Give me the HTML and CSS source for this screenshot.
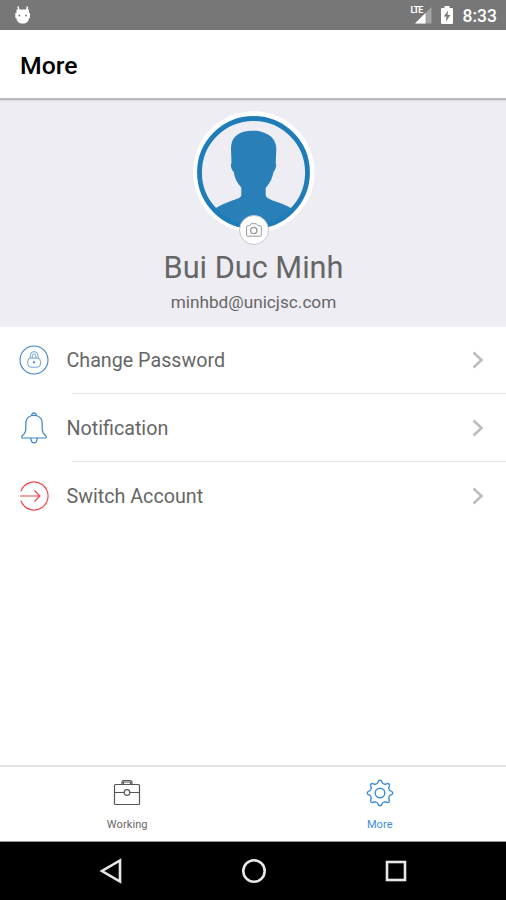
FILE: index.html
```
<!DOCTYPE html>
<html lang="en">
<head>
  <meta charset="UTF-8">
  <meta name="viewport" content="width=device-width, initial-scale=1.0">
  <title>More</title>
  <link rel="stylesheet" href="styles.css">
</head>
<body>
  <div class="status-bar">
    <svg class="debug-icon" width="18" height="20" viewBox="0 0 18 20">
      <path d="M4 1.500L5 6M13.500 1.500L12.500 6" stroke="#fff" stroke-width="1.500"/>
      <path d="M2.500 4.500h12.500v3.500h1v5h-1c0 3.500-2.500 5.500-6.300 5.500S2.500 16.500 2.500 13H1.300V8h1.200z" fill="#fff"/>
      <circle cx="5.300" cy="10.500" r=".9" fill="#777"/>
      <circle cx="12" cy="10.500" r=".9" fill="#777"/>
    </svg>
    <div class="status-right">
      <div class="signal">
        <span class="lte">LTE</span>
        <svg width="18" height="18" viewBox="0 0 18 18">
          <path d="M1 17.500L17.500 1v16.500z" fill="#a3a3a3"/>
          <path d="M1 17.500L11.500 7v10.500z" fill="#fff"/>
        </svg>
      </div>
      <svg class="battery" width="12" height="18" viewBox="0 0 12 18">
        <path d="M3.500 0h5v2H11q1 0 1 1v14q0 1-1 1H1q-1 0-1-1V3q0-1 1-1h2.500z" fill="#fff"/>
        <path d="M7 4.500L2.800 10.500H5.500L5 15.500L9.300 9H6.500z" fill="#777"/>
      </svg>
      <span class="time">8:33</span>
    </div>
  </div>

  <header class="header">
    <h1>More</h1>
  </header>

  <section class="profile">
    <div class="avatar">
      <svg width="122" height="122" viewBox="0 0 122 122">
        <defs>
          <clipPath id="face"><circle cx="60.500" cy="61.500" r="56"/></clipPath>
        </defs>
        <circle cx="60.700" cy="61" r="60.800" fill="#fff"/>
        <circle cx="60.500" cy="61.500" r="54" fill="#eeedf3"/>
        <path clip-path="url(#face)" fill="#2980b9" d="M59 19.700C67 19.300 71 21.500 74 23C80 26 83.500 31 83.300 39L82.700 52C84 54 82.500 59 80.500 61C79.500 67 77 72 72.700 77V84C73 88 82 90 87 92C92 94 97 96 99 98V122H22V97.500C27 94 33 92 38 90C43 88 48.300 87 48.300 84V76.500C44 72 41.500 67 40.800 61C38.500 59 37 54 38.500 52L38 38C38 31 40 27 44 24C48 21 53 19.700 59 19.700z"/>
        <circle cx="60.500" cy="61.500" r="54" fill="none" stroke="#1e7db8" stroke-width="4.800"/>
      </svg>
      <button class="camera" aria-label="Change photo">
        <svg width="16" height="14" viewBox="0 0 16 14" fill="none" stroke="#999">
          <path d="M1.800 2.700H3.700L5.200 .7H10.300L11.800 2.700H14Q15.300 2.700 15.300 4V12Q15.300 13.200 14 13.200H1.800Q.6 13.200 .6 12V4Q.6 2.700 1.800 2.700z"/>
          <circle cx="7.800" cy="7.500" r="3.200" stroke-width="1.300"/>
        </svg>
      </button>
    </div>
    <div class="name">Bui Duc Minh</div>
    <div class="email">minhbd@unicjsc.com</div>
  </section>

  <main class="menu">
    <div class="item">
      <svg class="item-icon" width="32" height="32" viewBox="0 0 32 32" fill="none" stroke="#3b83c5" stroke-width="1.100">
        <circle cx="16" cy="16" r="14"/>
        <g stroke="#6fa0d0" stroke-width="1">
          <rect x="9.800" y="14.200" width="12.600" height="9" rx="3"/>
          <path d="M12.200 14V11.500a3.900 3.900 0 0 1 7.800 0V14M14.300 14v-2.300a1.800 1.800 0 0 1 3.600 0V14"/>
        </g>
        <circle cx="16" cy="18.300" r=".6"/>
      </svg>
      <div class="item-body">
        <span>Change Password</span>
        <svg class="chevron" width="12" height="18" viewBox="0 0 12 18"><path d="M1.500 1.500L9.500 9L1.500 16.500"/></svg>
      </div>
    </div>
    <div class="item">
      <svg class="item-icon" width="32" height="32" viewBox="0 0 32 32" fill="none" stroke="#3b83c5" stroke-width="1.200">
        <path d="M13.800 3.500C13.800 .1 18.200 .1 18.200 3.500C22.500 4.500 24.200 8 24.200 12V17C24.200 20.500 26 22.500 28 24C28.700 25.500 28 26 27 26H5C4 26 3.300 25.500 4 24C6 22.500 7.800 20.500 7.800 17V12C7.800 8 9.500 4.500 13.800 3.500z"/>
        <path d="M13.800 3.700Q16 3 18.200 3.700M12.800 26C12.800 32.500 19.200 32.500 19.200 26"/>
      </svg>
      <div class="item-body">
        <span>Notification</span>
        <svg class="chevron" width="12" height="18" viewBox="0 0 12 18"><path d="M1.500 1.500L9.500 9L1.500 16.500"/></svg>
      </div>
    </div>
    <div class="item">
      <svg class="item-icon" width="32" height="32" viewBox="0 0 32 32" fill="none" stroke="#ee4848" stroke-width="1.200">
        <path d="M2.900 11.200A14 14 0 1 1 2.900 20.800M2 16H22M16.500 10.500L22 16L16.500 21.500"/>
      </svg>
      <div class="item-body">
        <span>Switch Account</span>
        <svg class="chevron" width="12" height="18" viewBox="0 0 12 18"><path d="M1.500 1.500L9.500 9L1.500 16.500"/></svg>
      </div>
    </div>
  </main>

  <nav class="tabs">
    <div class="tab">
      <svg width="28" height="28" viewBox="0 0 28 28" fill="none" stroke="#555" stroke-width="1.200">
        <rect x="1.500" y="5.500" width="25" height="20" rx="1"/>
        <path d="M9 5.500V3.500Q9 1.500 11 1.500H17Q19 1.500 19 3.500V5.500M10.500 5.500V3H17.500V5.500M2 13.500H11M17 13.500H26"/>
        <circle cx="14" cy="13.500" r="2.800"/>
      </svg>
      <span>Working</span>
    </div>
    <div class="tab active">
      <svg width="28" height="28" viewBox="0 0 28 28" fill="none" stroke="#3c8ddb" stroke-width="1.400">
        <defs>
          <path id="tooth" d="M10.250 4.950Q11.700 4.500 12.100 3Q12.500 1.300 14 1.300Q15.500 1.300 15.900 3Q16.300 4.500 17.750 4.950"/>
        </defs>
        <use href="#tooth"/>
        <use href="#tooth" transform="rotate(45 14 14)"/>
        <use href="#tooth" transform="rotate(90 14 14)"/>
        <use href="#tooth" transform="rotate(135 14 14)"/>
        <use href="#tooth" transform="rotate(180 14 14)"/>
        <use href="#tooth" transform="rotate(225 14 14)"/>
        <use href="#tooth" transform="rotate(270 14 14)"/>
        <use href="#tooth" transform="rotate(315 14 14)"/>
        <circle cx="14" cy="14" r="4.800"/>
      </svg>
      <span>More</span>
    </div>
  </nav>

  <div class="nav-bar">
    <svg width="26" height="26" viewBox="0 0 26 26"><path d="M22 2.500V23.500L4 13z"/></svg>
    <svg width="26" height="26" viewBox="0 0 26 26"><circle cx="13" cy="13" r="10.700"/></svg>
    <svg width="26" height="26" viewBox="0 0 26 26"><rect x="4" y="4" width="18" height="18"/></svg>
  </div>
</body>
</html>
```
FILE: styles.css
```
* {
  box-sizing: border-box;
}
body {
  margin: 0;
  height: 900px;
  display: flex;
  flex-direction: column;
  background: #fff;
  color: #666;
  font-family: Roboto, "Liberation Sans", sans-serif;
  overflow: hidden;
}
svg {
  display: block;
  flex: none;
}
.status-bar {
  height: 30px;
  flex: none;
  display: flex;
  justify-content: space-between;
  align-items: center;
  padding: 0 9px 0 14px;
  background: #777;
  color: #fff;
}
.status-right {
  display: flex;
  align-items: center;
}
.signal {
  position: relative;
  margin-right: 9px;
}
.lte {
  position: absolute;
  left: -3px;
  top: 0;
  font-size: 9px;
  line-height: 9px;
  font-weight: bold;
  letter-spacing: -0.9px;
}
.battery {
  margin-right: 10px;
}
.time {
  font-size: 17.5px;
  font-weight: 500;
  padding-top: 1px;
}
.header {
  height: 70px;
  flex: none;
  display: flex;
  align-items: center;
  padding: 2px 0 0 20px;
  border-bottom: 2px solid #bcbcbf;
  box-shadow: 0 1px 1px #dcdce0;
  z-index: 1;
}
.header h1 {
  margin: 0;
  color: #000;
  font-size: 24.8px;
  font-weight: 500;
}
.profile {
  height: 227px;
  flex: none;
  display: flex;
  flex-direction: column;
  align-items: center;
  padding: 11px 0 0 1px;
  background: #eeedf3;
}
.avatar {
  position: relative;
}
.camera {
  position: absolute;
  left: 46px;
  bottom: -12px;
  width: 30px;
  height: 30px;
  padding: 0;
  display: flex;
  align-items: center;
  justify-content: center;
  border: 1px solid #c8c8cb;
  border-radius: 50%;
  background: #fff;
}
.name {
  margin-top: 16px;
  font-size: 30.7px;
  line-height: 38px;
}
.email {
  margin-top: 4px;
  font-size: 17.2px;
  line-height: 22px;
}
.menu {
  flex: 1;
  margin-top: -1px;
}
.item {
  height: 68px;
  display: flex;
  align-items: center;
  padding-left: 18px;
}
.item-icon {
  margin-right: 16.5px;
}
.item-body {
  position: relative;
  flex: 1;
  height: 100%;
  display: flex;
  align-items: center;
  justify-content: space-between;
  padding-right: 22px;
  font-size: 19.7px;
}
.item:not(:last-child) .item-body::after {
  content: "";
  position: absolute;
  left: 5px;
  right: 0;
  bottom: 0;
  border-bottom: 1px solid #e6e6e8;
}
.chevron path {
  fill: none;
  stroke: #b9bdc2;
  stroke-width: 2.5;
}
.tabs {
  height: 77px;
  flex: none;
  display: flex;
  border-top: 2px solid #e3e3e3;
  border-bottom: 1px solid #999;
}
.tab {
  flex: 1;
  display: flex;
  flex-direction: column;
  align-items: center;
  padding: 12px 0 0 1px;
  font-size: 11px;
}
.tab span {
  margin-top: 11px;
  letter-spacing: 0.1px;
}
.tab.active {
  padding-left: 0;
  color: #3c8ddb;
}
.nav-bar {
  height: 58px;
  flex: none;
  display: flex;
  align-items: center;
  justify-content: space-between;
  padding: 0 97px 0 98px;
  background: #000;
}
.nav-bar svg {
  fill: none;
  stroke: #e8e8e8;
  stroke-width: 2.6;
}
```
